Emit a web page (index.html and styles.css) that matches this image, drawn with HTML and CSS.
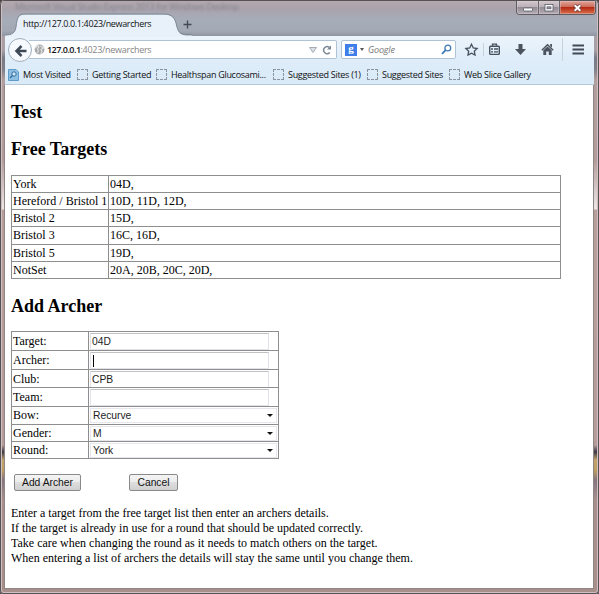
FILE: index.html
```
<!DOCTYPE html>
<html lang="en">
<head>
<meta charset="utf-8">
<title>http://127.0.0.1:4023/newarchers</title>
<link rel="stylesheet" href="styles.css">
</head>
<body>
<div class="window">
  <div class="titlebar">
    <span class="behind">Microsoft Visual Studio Express 2013 for Windows Desktop</span>
    <svg class="tab-shape" width="187" height="24" viewBox="0 0 187 24">
      <path d="M0 24V22C7 22 10 20 11 14C12 5 13 1.5 20 1.5H159C167 1.5 170 5 171.500 12C173 19 175 22.500 182 22.500H187V24Z" fill="#e8f1fa"/>
      <path d="M0 22C7 22 10 20 11 14C12 5 13 1 20 1H159C167 1 170 5 171.500 12C173 19 175 21.500 182 21.500H187" fill="none" stroke="#7d8896"/>
    </svg>
    <span class="tab-title">http://127.0.0.1:4023/newarchers</span>
    <svg class="plus" width="9" height="9" viewBox="0 0 9 9"><path d="M4.500 .5V8.500M.5 4.500H8.500" stroke="#424a55" stroke-width="1.400"/></svg>
    <div class="controls">
      <div class="ctl"><svg width="21" height="13" viewBox="0 0 21 13"><rect x="6.500" y="7" width="9" height="3" rx=".5" fill="#fff" stroke="#555b66" stroke-width=".8"/></svg></div>
      <div class="ctl"><svg width="20" height="13" viewBox="0 0 20 13"><rect x="6" y="3.500" width="8" height="6.500" fill="#fff" stroke="#555b66" stroke-width=".8"/><rect x="8" y="5.800" width="4" height="2" fill="#9a9ba5" stroke="#555b66" stroke-width=".7"/></svg></div>
      <div class="ctl close"><svg width="35" height="13" viewBox="0 0 35 13"><path d="M14.500 4L20.500 10M20.500 4L14.500 10" stroke="#643c40" stroke-width="3.400"/><path d="M14.700 4.200L20.300 9.800M20.300 4.200L14.700 9.800" stroke="#fff" stroke-width="2"/></svg></div>
    </div>
  </div>

  <div class="chrome">
    <div class="navbar">
      <div class="back"><svg width="24" height="24" viewBox="0 0 24 24"><path d="M12.500 7L7.500 12L12.500 17M8 12H17.500" fill="none" stroke="#3f4955" stroke-width="2.500"/></svg></div>
      <div class="urlbar">
        <svg class="globe" width="11" height="11" viewBox="0 0 11 11"><circle cx="5.500" cy="5.500" r="4.900" fill="#a6a8aa"/><path d="M1 4L4 1.500L5 3L3.500 5L4.500 7L3 9M6.500 2L9.500 4L7 5.500L8 8L6.500 10" fill="none" stroke="#e6e6e6" stroke-width="1.100"/></svg>
        <span class="url"><b>127.0.0.1</b>:4023/newarchers</span>
        <svg class="drop" width="8" height="6" viewBox="0 0 8 6"><path d="M.5 .5H7.500L4 5.500Z" fill="#dde1e6" stroke="#a4acb6"/></svg>
        <svg class="reload" width="10" height="10" viewBox="0 0 10 10"><path d="M7.800 7.500A3.500 3.500 0 1 1 7.500 2.500" fill="none" stroke="#788592" stroke-width="1.400"/><path d="M9 .5V4.500H5Z" fill="#788592"/></svg>
      </div>
      <div class="search">
        <span class="g">g</span>
        <i class="tri"></i>
        <span class="google">Google</span>
        <svg class="mag" width="11" height="11" viewBox="0 0 11 11"><circle cx="6.800" cy="4" r="2.900" fill="none" stroke="#3e7bb5" stroke-width="1.300"/><path d="M4.600 6.200L1 9.800" stroke="#3e7bb5" stroke-width="1.800"/></svg>
      </div>
      <svg class="tools" width="134" height="26" viewBox="0 0 134 26">
        <path d="M15.500 8.300L17.300 12L21.100 12.500L18.300 15.200L19 19L15.500 17.200L12 19L12.700 15.200L9.900 12.500L13.700 12Z" fill="none" stroke="#46515f" stroke-width="1.300"/>
        <path d="M27.500 7V20" stroke="#c8d2dd"/>
        <rect x="33.700" y="10.200" width="9.600" height="8.200" rx=".8" fill="none" stroke="#46515f" stroke-width="1.400"/>
        <path d="M36.500 9.700V8.200H40.500V9.700M35 13H37M38 13H42M35 15.800H37M38 15.800H42" fill="none" stroke="#46515f" stroke-width="1.300"/>
        <path d="M62.500 8H66.500V13H70L64.500 19L59 13H62.500Z" fill="#4b535e"/>
        <path d="M85.800 14.200L91.500 8.800L97.200 14.200" fill="none" stroke="#4b535e" stroke-width="1.500"/>
        <path d="M87.300 14.300L91.500 10.500L95.700 14.300V19H92.800V15.500H90.200V19H87.300ZM94.200 8H96V11.500L94.200 10Z" fill="#4b535e"/>
        <path d="M106.500 2V25" stroke="#c8d2dd"/>
        <path d="M116.500 9.500H128M116.500 13.500H128M116.500 17.500H128" stroke="#414a55" stroke-width="2"/>
      </svg>
    </div>
    <div class="bookmarks">
      <svg class="visited" width="11" height="12" viewBox="0 0 11 12"><path d="M.5 .5H8L10.500 3V11.500H.5Z" fill="#8fc0e2" stroke="#5e9bc8"/><circle cx="6" cy="5" r="2.200" fill="#cfe6f6" stroke="#2f6b9c"/><path d="M4.500 6.500L2 9" stroke="#2f6b9c" stroke-width="1.300"/></svg>
      <span class="bm bm1">Most Visited</span>
      <i class="dash"></i><span class="bm bm2">Getting Started</span>
      <i class="dash"></i><span class="bm bm3">Healthspan Glucosami...</span>
      <i class="dash"></i><span class="bm bm4">Suggested Sites (1)</span>
      <i class="dash"></i><span class="bm bm5">Suggested Sites</span>
      <i class="dash"></i><span class="bm bm6">Web Slice Gallery</span>
    </div>
  </div>

  <main class="page">
    <h2>Test</h2>
    <h2>Free Targets</h2>
    <div class="grid targets">
      <div>York</div><div>04D,</div>
      <div>Hereford / Bristol 1</div><div>10D, 11D, 12D,</div>
      <div>Bristol 2</div><div>15D,</div>
      <div>Bristol 3</div><div>16C, 16D,</div>
      <div>Bristol 5</div><div>19D,</div>
      <div>NotSet</div><div>20A, 20B, 20C, 20D,</div>
    </div>
    <h2 class="add">Add Archer</h2>
    <div class="grid form">
      <div>Target:</div><div><span class="input">04D</span></div>
      <div>Archer:</div><div><span class="input"><i class="caret"></i></span></div>
      <div>Club:</div><div><span class="input">CPB</span></div>
      <div>Team:</div><div><span class="input"></span></div>
      <div>Bow:</div><div><span class="select">Recurve<i class="tri"></i></span></div>
      <div>Gender:</div><div><span class="select">M<i class="tri"></i></span></div>
      <div>Round:</div><div><span class="select">York<i class="tri"></i></span></div>
    </div>
    <div class="buttons"><button class="b1">Add Archer</button><button class="b2">Cancel</button></div>
    <p>Enter a target from the free target list then enter an archers details.<br>If the target is already in use for a round that should be updated correctly.<br>Take care when changing the round as it needs to match others on the target.<br>When entering a list of archers the details will stay the same until you change them.</p>
  </main>
</div>
</body>
</html>
```
FILE: styles.css
```
* { box-sizing: border-box; }
html, body { margin: 0; height: 594px; overflow: hidden; background: #4d4649; }
svg { display: block; flex: none; }
.window {
  width: 599px; height: 594px; padding: 0 5px 5px 4px; display: flex; flex-direction: column;
  border-radius: 5px 5px 4px 4px;
  background: linear-gradient(#a99ea5 0, #a9a0a5 50px, #777b86 58px, #81808a 70px, #b19e9e 80px, #b39b9b 160px, #eee7e7 209px, #b79e9b 210px, #b69c9a 445px, #3b3947 452px, #c3a36a 460px, #bf9e60 470px, #84757f 480px, #a88f8e 500px, #a98f8b 594px);
  box-shadow: inset 0 0 0 1px #555155, inset 0 0 0 2px #d0c1c1;
}
.titlebar {
  position: relative; height: 35px; flex: none; margin: 1px -3px 0 -2px; padding: 12px 3px 0; display: flex;
  background: linear-gradient(#b3a8ae 0, #a9a3ad 8px, #a5adb9 20px, #a2a9b5 30px, #9299a5 34px);
}
.behind { position: absolute; left: 13px; top: 0; font: 9px/11px "Open Sans", sans-serif; letter-spacing: -.4px; color: #6f6d78; filter: blur(1.2px); opacity: .6; white-space: nowrap; }
.tab-shape { position: relative; }
.tab-title { position: absolute; left: 21px; top: 17px; line-height: 12px; }
.tab-title, .url, .google, .bm { font-family: "Open Sans", sans-serif; font-size: 9px; white-space: nowrap; color: #111; }
.tab-title { letter-spacing: -.36px; }
.plus { margin: 7px 0 0 -9px; position: relative; }
.controls { position: absolute; right: 1px; top: 0; display: flex; height: 14px; border: 1px solid #5f5b63; border-top: 0; border-radius: 0 0 4px 4px; overflow: hidden; }
.ctl { border-right: 1px solid #69656d; background: linear-gradient(#d2c8cc, #b9aeb5 48%, #938b95 50%, #b5adb5); box-shadow: inset 0 0 0 1px #ded5d866; }
.close { border: 0; background: linear-gradient(#e1a49a, #cc6856 48%, #b52b16 50%, #d9704b); }
.chrome { height: 49px; flex: none; background: linear-gradient(#ecf4fb, #dfedf9 45%, #d9eaf8); border-bottom: 1px solid #b9c8d7; margin-left: 1px; }
.navbar { display: flex; height: 27px; align-items: center; padding-left: 3px; }
.back { width: 24px; height: 24px; border: 1px solid #9eacbc; border-radius: 50%; background: #f6fafe; z-index: 1; display: grid; place-items: center; }
.urlbar { display: flex; align-items: center; width: 308px; height: 19px; margin-left: -3px; border: 1px solid #b0c3d5; border-left: 0; border-radius: 0 2px 2px 0; background: #fff; padding-left: 5px; }
.url { margin-left: 2px; color: #858585; letter-spacing: -.28px; flex: 1; }
.url b { color: #111; font-weight: 600; letter-spacing: -.53px; }
.drop { margin-right: 5px; }
.reload { margin-right: 4px; }
.search { display: flex; align-items: center; width: 115px; height: 19px; margin-left: 4px; border: 1px solid #b0c3d5; border-radius: 2px; background: #fff; padding: 0 3px; }
.g { width: 12px; height: 12px; background: #3f7ee8; color: #fff; font: bold 11px/9px "Liberation Serif", serif; text-align: center; }
.tri { width: 0; height: 0; border: 3px solid transparent; border-top: 3px solid #111; border-bottom: 0; }
.search .tri { margin-left: 3px; border-width: 3px 2.5px 0; border-top-color: #555; }
.google { margin-left: 4px; color: #777; font-style: italic; flex: 1; letter-spacing: -.15px; }
.tools { margin-top: -2px; }
.bookmarks { display: flex; height: 21px; align-items: center; padding: 2px 0 0 3px; }
.bm { margin-left: 4px; line-height: 12px; letter-spacing: -.29px; flex: none; }
.bm1 { width: 54px; }
.bm2 { width: 64px; }
.bm3 { width: 102px; }
.bm4 { width: 79px; }
.bm5 { width: 67px; }
.dash { width: 11px; height: 11px; border: 1px dashed #8a929b; border-radius: 1px; flex: none; }
.page { flex: 1; background: #fff; padding: 16px 7px 0 6px; margin: 0; font: 12px/15px "Liberation Serif", serif; color: #000; border: solid #8f8585; border-width: 0 1px 1px; }
h2 { font-size: 18px; line-height: 22px; margin: 0 0 15px; }
.grid { display: grid; border: solid #8e8e8e; border-width: 0 1px 1px 0; }
.grid > div { border: solid #8e8e8e; border-width: 1px 0 0 1px; padding-left: 1px; white-space: nowrap; overflow: hidden; }
.targets { width: 550px; grid-template: 17px 17px 17px 18px 17px 17px / 97px 1fr; line-height: 16px; }
h2.add { margin: 16px 0 14px; }
.form { width: 268px; grid-template: 19px 19px 18px 19px 18px 17px 17px / 77px 1fr; }
.form > div:nth-child(odd) { padding-top: 2px; }
.form > div:nth-child(n+9):nth-child(odd) { padding-top: 1px; }
.input, .select { display: flex; align-items: center; font: 10.3px/15px "Liberation Sans", sans-serif; color: #222; }
.input { width: 179px; height: 17px; margin-top: 1px; border: 1px solid #e2e3ea; border-top-color: #c0c1c4; padding-left: 1px; }
.caret { width: 1px; height: 12px; background: #000; margin-left: 1px; }
.select { height: 15px; width: 187px; margin-top: 1px; justify-content: space-between; border: 1px solid #e6e6ec; padding: 0 3px 0 2px; }
.buttons { display: flex; padding: 15px 0 0 3px; }
button { height: 17px; padding: 0; border: 1px solid #8a8a8a; border-radius: 2px; background: linear-gradient(#f4f4f4, #ececec 48%, #dedede 50%, #d0d0d0); font: 10.3px/14px "Liberation Sans", sans-serif; color: #111; }
.b1 { width: 67px; }
.b2 { width: 49px; margin-left: 48px; }
p { margin: 15px 0 0; white-space: nowrap; }
```
